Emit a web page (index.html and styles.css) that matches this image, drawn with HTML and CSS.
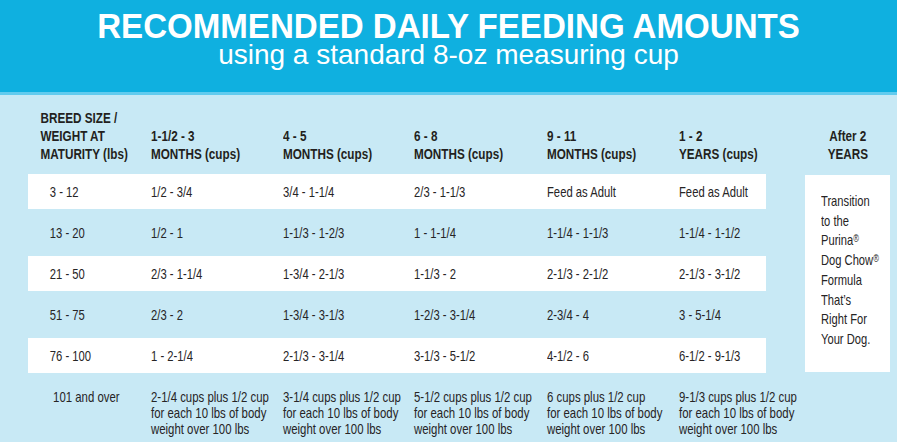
FILE: index.html
```html
<!DOCTYPE html>
<html lang="en">
<head>
<meta charset="utf-8">
<title>Recommended Daily Feeding Amounts</title>
<link rel="stylesheet" href="styles.css">
</head>
<body>
<header class="banner">
  <h1 class="title">RECOMMENDED DAILY FEEDING AMOUNTS</h1>
  <p class="subtitle">using a standard 8-oz measuring cup</p>
</header>
<main class="content">
  <section class="table">
    <div class="row head">
      <div class="cell first">BREED SIZE /<br>WEIGHT AT<br>MATURITY (lbs)</div>
      <div class="cell">1-1/2 - 3<br>MONTHS (cups)</div>
      <div class="cell">4 - 5<br>MONTHS (cups)</div>
      <div class="cell">6 - 8<br>MONTHS (cups)</div>
      <div class="cell">9 - 11<br>MONTHS (cups)</div>
      <div class="cell">1 - 2<br>YEARS (cups)</div>
    </div>
    <div class="row band white">
      <div class="cell first">3 - 12</div>
      <div class="cell">1/2 - 3/4</div>
      <div class="cell">3/4 - 1-1/4</div>
      <div class="cell">2/3 - 1-1/3</div>
      <div class="cell">Feed as Adult</div>
      <div class="cell">Feed as Adult</div>
    </div>
    <div class="row band">
      <div class="cell first">13 - 20</div>
      <div class="cell">1/2 - 1</div>
      <div class="cell">1-1/3 - 1-2/3</div>
      <div class="cell">1 - 1-1/4</div>
      <div class="cell">1-1/4 - 1-1/3</div>
      <div class="cell">1-1/4 - 1-1/2</div>
    </div>
    <div class="row band white">
      <div class="cell first">21 - 50</div>
      <div class="cell">2/3 - 1-1/4</div>
      <div class="cell">1-3/4 - 2-1/3</div>
      <div class="cell">1-1/3 - 2</div>
      <div class="cell">2-1/3 - 2-1/2</div>
      <div class="cell">2-1/3 - 3-1/2</div>
    </div>
    <div class="row band">
      <div class="cell first">51 - 75</div>
      <div class="cell">2/3 - 2</div>
      <div class="cell">1-3/4 - 3-1/3</div>
      <div class="cell">1-2/3 - 3-1/4</div>
      <div class="cell">2-3/4 - 4</div>
      <div class="cell">3 - 5-1/4</div>
    </div>
    <div class="row band white">
      <div class="cell first">76 - 100</div>
      <div class="cell">1 - 2-1/4</div>
      <div class="cell">2-1/3 - 3-1/4</div>
      <div class="cell">3-1/3 - 5-1/2</div>
      <div class="cell">4-1/2 - 6</div>
      <div class="cell">6-1/2 - 9-1/3</div>
    </div>
    <div class="row last">
      <div class="cell first">101 and over</div>
      <div class="cell">2-1/4 cups plus 1/2 cup<br>for each 10 lbs of body<br>weight over 100 lbs</div>
      <div class="cell">3-1/4 cups plus 1/2 cup<br>for each 10 lbs of body<br>weight over 100 lbs</div>
      <div class="cell">5-1/2 cups plus 1/2 cup<br>for each 10 lbs of body<br>weight over 100 lbs</div>
      <div class="cell">6 cups plus 1/2 cup<br>for each 10 lbs of body<br>weight over 100 lbs</div>
      <div class="cell">9-1/3 cups plus 1/2 cup<br>for each 10 lbs of body<br>weight over 100 lbs</div>
    </div>
  </section>
  <aside class="side">
    <div class="side-head"><div class="side-head-text">After 2<br>YEARS</div></div>
    <div class="side-box"><div class="side-text">Transition<br>to the<br>Purina<sup>®</sup><br>Dog Chow<sup>®</sup><br>Formula<br>That’s<br>Right For<br>Your Dog.</div></div>
  </aside>
</main>
</body>
</html>
```
FILE: styles.css
```css
html, body {
  margin: 0;
  padding: 0;
}
body {
  width: 897px;
  height: 442px;
  overflow: hidden;
  background: #c8e9f5;
  font-family: "Liberation Sans", Arial, sans-serif;
  color: #262425;
}
.banner {
  background: #0fb0e0;
  height: 92px;
  border-bottom: 3px solid #62cbee;
  text-align: center;
  color: #fff;
}
.title {
  margin: 0;
  padding-top: 9px;
  font-weight: bold;
  font-size: 35px;
  line-height: 34px;
  white-space: nowrap;
  transform: scaleX(0.945);
  transform-origin: 50% 50%;
}
.subtitle {
  margin: 0;
  padding-top: 3px;
  font-size: 28px;
  line-height: 18px;
  font-weight: normal;
  white-space: nowrap;
}
.content {
  display: flex;
  padding-left: 28px;
}
.table {
  width: 738px;
  display: flex;
  flex-direction: column;
  gap: 6px;
}
.row {
  display: grid;
  grid-template-columns: 123px 132px 131px 133px 132px 87px;
  align-items: center;
}
.cell {
  white-space: nowrap;
  transform: scaleX(0.75);
  transform-origin: 0 50%;
}
.row.head {
  height: 79px;
  align-items: end;
  padding-bottom: 11px;
  box-sizing: border-box;
  margin-bottom: -6px;
  font-weight: bold;
  font-size: 15px;
  line-height: 18px;
  color: #231f20;
}
.row.head .cell {
  transform: scaleX(0.78);
}
.row.head .cell.first {
  padding-left: 16px;
}
.band {
  height: 35px;
  font-size: 15px;
}
.band.white {
  background: #fff;
}
.cell.first {
  padding-left: 29px;
}
.row.last {
  align-items: start;
  padding-top: 10px;
  font-size: 15px;
  line-height: 16px;
}
.row.last .cell {
  transform: scaleX(0.76);
}
.row.last .cell.first {
  padding-left: 33px;
}
.side {
  width: 85px;
  margin-left: 39px;
}
.side-head {
  height: 79px;
  box-sizing: border-box;
  padding-bottom: 11px;
  display: flex;
  align-items: flex-end;
  justify-content: center;
}
.side-head-text {
  text-align: center;
  font-weight: bold;
  font-size: 15px;
  line-height: 18px;
  color: #231f20;
  white-space: nowrap;
  transform: scaleX(0.78);
}
.side-box {
  margin-top: 1px;
  height: 197px;
  box-sizing: border-box;
  background: #fff;
  padding: 17px 0 0 16px;
}
.side-text {
  font-size: 14.5px;
  line-height: 19.7px;
  white-space: nowrap;
  transform: scaleX(0.77);
  transform-origin: 0 50%;
}
.side-text sup {
  font-size: 10px;
  line-height: 0;
  vertical-align: 3px;
}
```
